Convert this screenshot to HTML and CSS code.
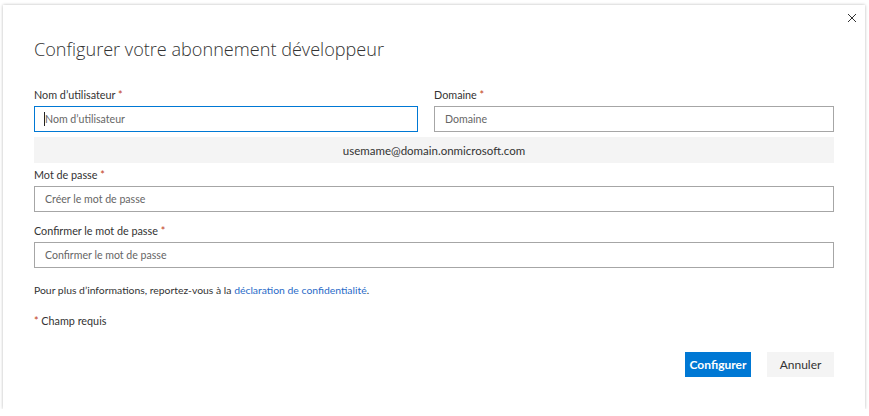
FILE: index.html
```html
<!DOCTYPE html>
<html lang="fr">
<head>
<meta charset="utf-8">
<title>Configurer votre abonnement développeur</title>
<link rel="stylesheet" href="styles.css">
</head>
<body>
<div class="dialog">
  <button class="close" aria-label="Fermer">
    <svg width="10" height="10" viewBox="0 0 10 10"><path d="M1 1 L9 9 M9 1 L1 9" stroke="#333" stroke-width="1" fill="none"/></svg>
  </button>
  <h1 class="title">Configurer votre abonnement développeur</h1>
  <div class="row">
    <div class="field">
      <label class="label">Nom d’utilisateur <span class="req">*</span></label>
      <div class="input focused"><span class="caret"></span><span class="ph">Nom d’utilisateur</span></div>
    </div>
    <div class="field">
      <label class="label">Domaine <span class="req">*</span></label>
      <div class="input"><span class="ph">Domaine</span></div>
    </div>
  </div>
  <div class="preview">usemame@domain.onmicrosoft.com</div>
  <div class="field f-pass">
    <label class="label">Mot de passe <span class="req">*</span></label>
    <div class="input"><span class="ph">Créer le mot de passe</span></div>
  </div>
  <div class="field f-confirm">
    <label class="label">Confirmer le mot de passe <span class="req">*</span></label>
    <div class="input"><span class="ph">Confirmer le mot de passe</span></div>
  </div>
  <p class="info">Pour plus d’informations, reportez-vous à la <a href="#" class="link">déclaration de confidentialité</a>.</p>
  <p class="required"><span class="req">*</span> Champ requis</p>
  <div class="actions">
    <button class="btn primary">Configurer</button>
    <button class="btn secondary">Annuler</button>
  </div>
</div>
</body>
</html>
```
FILE: styles.css
```css
html, body {
  margin: 0;
  padding: 0;
  background: #ffffff;
}
body {
  font-family: Lato, "Open Sans", sans-serif;
  color: #333333;
  font-size: 11px;
}
.dialog {
  position: relative;
  box-sizing: border-box;
  width: 862px;
  height: 404px;
  margin: 5px 0 0 3px;
  padding: 30px 31px 0 31px;
  background: #ffffff;
  box-shadow: 0 0 3px rgba(0, 0, 0, 0.28);
}
.close {
  position: absolute;
  top: 3px;
  right: 3px;
  width: 20px;
  height: 20px;
  padding: 0;
  border: 0;
  background: transparent;
  display: flex;
  align-items: center;
  justify-content: center;
}
.close svg { display: block; }
.title {
  margin: 0;
  font-family: "Open Sans", sans-serif;
  font-weight: 300;
  font-size: 18.1px;
  line-height: 28px;
  color: #333333;
}
.row {
  display: grid;
  grid-template-columns: 384px 1fr;
  column-gap: 16px;
  margin-top: 24px;
}
.field {
  display: flex;
  flex-direction: column;
}
.label {
  font-size: 10.8px;
  line-height: 16px;
  height: 16px;
  margin-bottom: 3px;
  color: #333333;
}
.req {
  color: #c2401a;
}
.input {
  box-sizing: border-box;
  height: 26px;
  border: 1px solid #a6a6a6;
  padding: 0 10px;
  display: flex;
  align-items: center;
  font-size: 10.6px;
  background: #ffffff;
}
.input.focused {
  border-color: #0078d4;
  padding-left: 9px;
}
.caret {
  width: 1px;
  height: 14px;
  background: #222;
}
.ph {
  color: #666666;
}
.preview {
  margin-top: 5px;
  height: 26px;
  background: #f4f4f4;
  display: flex;
  align-items: center;
  justify-content: center;
  font-size: 11.5px;
  color: #333333;
}
.f-pass { margin-top: 4px; }
.f-confirm { margin-top: 11px; }
.info {
  margin: 14px 0 0;
  font-size: 10.4px;
  line-height: 16px;
}
.link {
  color: #2a6bc8;
  text-decoration: none;
}
.required {
  margin: 15px 0 0;
  font-size: 10.8px;
  line-height: 16px;
}
.actions {
  display: flex;
  justify-content: flex-end;
  gap: 16px;
  margin-top: 23px;
}
.btn {
  box-sizing: border-box;
  height: 25px;
  border: 0;
  padding: 0;
  font-family: Lato, "Open Sans", sans-serif;
  font-size: 12px;
}
.primary {
  width: 66px;
  background: #0078d4;
  color: #ffffff;
  font-weight: 700;
}
.secondary {
  width: 67px;
  background: #f4f4f4;
  color: #333333;
}
```
